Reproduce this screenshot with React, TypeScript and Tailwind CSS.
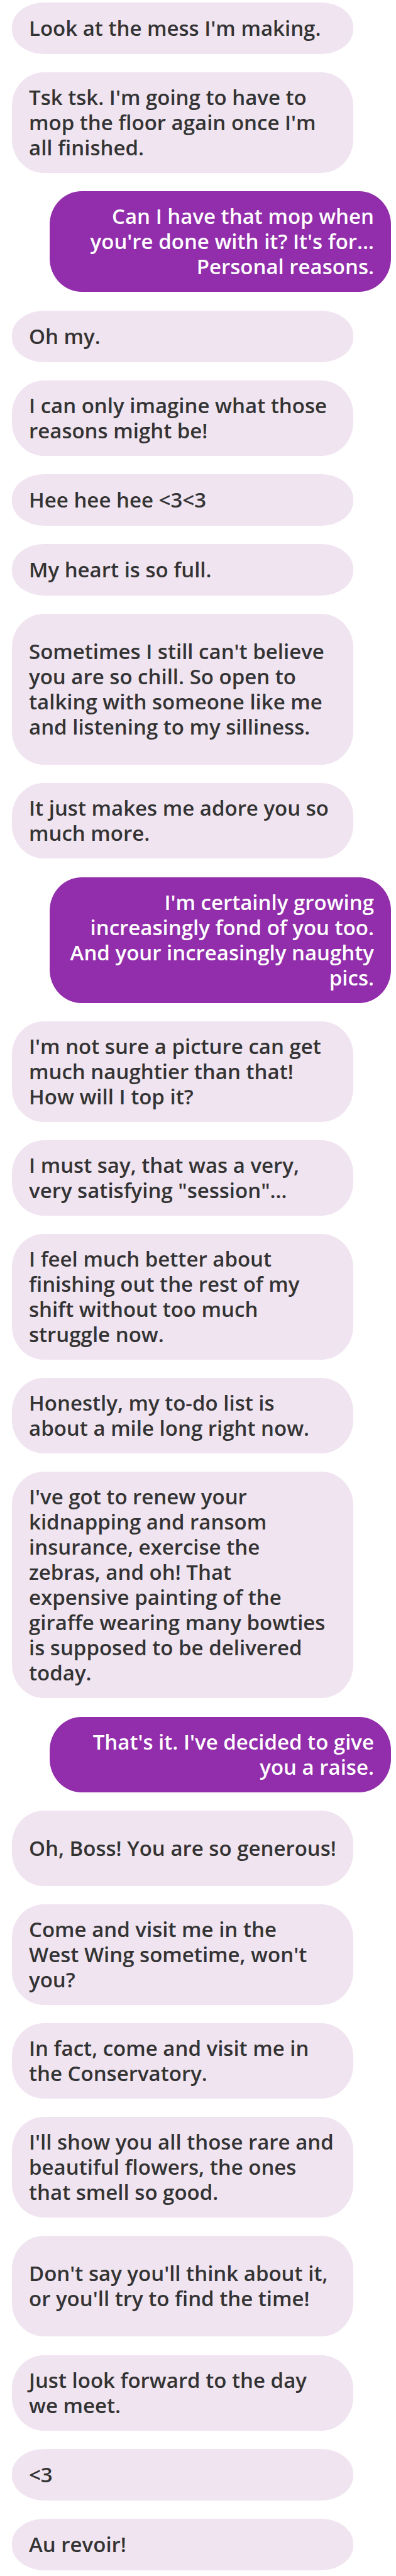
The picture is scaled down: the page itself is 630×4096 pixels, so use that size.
import { clsx } from "clsx";

type Message = {
  text: string;
  mine?: boolean;
  /** Adds an empty line's worth of space around the text. */
  roomy?: boolean;
};

const messages: Message[] = [
  { text: "Look at the mess I'm making." },
  { text: "Tsk tsk. I'm going to have to\nmop the floor again once I'm\nall finished." },
  { text: "Can I have that mop when\nyou're done with it? It's for…\nPersonal reasons.", mine: true },
  { text: "Oh my." },
  { text: "I can only imagine what those\nreasons might be!" },
  { text: "Hee hee hee <3<3" },
  { text: "My heart is so full." },
  {
    text: "Sometimes I still can't believe\nyou are so chill. So open to\ntalking with someone like me\nand listening to my silliness.",
    roomy: true,
  },
  { text: "It just makes me adore you so\nmuch more." },
  {
    text: "I'm certainly growing\nincreasingly fond of you too.\nAnd your increasingly naughty\npics.",
    mine: true,
  },
  { text: "I'm not sure a picture can get\nmuch naughtier than that!\nHow will I top it?" },
  { text: 'I must say, that was a very,\nvery satisfying "session"…' },
  { text: "I feel much better about\nfinishing out the rest of my\nshift without too much\nstruggle now." },
  { text: "Honestly, my to-do list is\nabout a mile long right now." },
  {
    text: "I've got to renew your\nkidnapping and ransom\ninsurance, exercise the\nzebras, and oh! That\nexpensive painting of the\ngiraffe wearing many bowties\nis supposed to be delivered\ntoday.",
  },
  { text: "That's it. I've decided to give\nyou a raise.", mine: true },
  { text: "Oh, Boss! You are so generous!", roomy: true },
  { text: "Come and visit me in the\nWest Wing sometime, won't\nyou?" },
  { text: "In fact, come and visit me in\nthe Conservatory." },
  { text: "I'll show you all those rare and\nbeautiful flowers, the ones\nthat smell so good." },
  { text: "Don't say you'll think about it,\nor you'll try to find the time!", roomy: true },
  { text: "Just look forward to the day\nwe meet." },
  { text: "<3" },
  { text: "Au revoir!" },
];

function Bubble({ text, mine, roomy }: Message) {
  const short = !roomy && !text.includes("\n");
  return (
    <li
      className={clsx(
        "flex w-9/10 flex-col justify-center px-[27px]",
        roomy ? "py-10" : "py-5",
        short ? "min-h-[82px] rounded-[51px/39px]" : "rounded-[51px/53px]",
        mine ? "self-end bg-[#922dab] text-right text-white" : "self-start bg-[#f0e4f0] text-[#333333]",
      )}
    >
      <p className="whitespace-pre">{text}</p>
    </li>
  );
}

export default function App() {
  return (
    <main className="min-h-screen bg-white font-['Open_Sans',sans-serif] text-[33px] leading-10 font-semibold">
      <ul className="flex min-h-screen flex-col justify-between gap-7 pt-1 pr-2 pb-[9px] pl-[19px]">
        {messages.map((message, i) => (
          <Bubble key={i} {...message} />
        ))}
      </ul>
    </main>
  );
}
